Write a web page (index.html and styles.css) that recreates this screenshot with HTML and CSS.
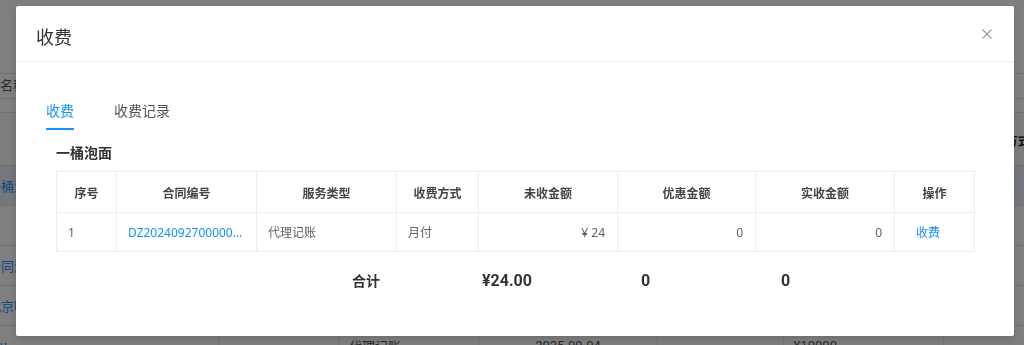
FILE: index.html
```html
<!DOCTYPE html>
<html lang="zh-CN">
<head>
  <meta charset="UTF-8" />
  <meta name="viewport" content="width=device-width, initial-scale=1.0" />
  <title>收费</title>
  <link rel="stylesheet" href="styles.css">
</head>
<body>

  <!-- page behind the dialog -->
  <div class="page">
    <div class="filter"><span class="filter-label">名称</span></div>
    <table class="list">
      <colgroup>
        <col style="width:218px"><col style="width:120px"><col style="width:140px"><col style="width:179px">
        <col style="width:125px"><col style="width:160px"><col style="width:82px">
      </colgroup>
      <tr class="list-head">
        <th></th><th></th><th></th><th></th><th></th><th></th><th class="last-head">收款方式</th>
      </tr>
      <tr class="hover"><td><span class="cut">一桶泡面</span></td><td></td><td>代理记账</td><td></td><td></td><td></td><td></td></tr>
      <tr><td></td><td></td><td></td><td></td><td></td><td></td><td></td></tr>
      <tr><td><span class="cut">合同测试</span></td><td></td><td>代理记账</td><td></td><td></td><td></td><td></td></tr>
      <tr><td><span class="cut">北京吗</span></td><td></td><td>代理记账</td><td></td><td></td><td></td><td></td></tr>
      <tr><td><span class="cut2">ч</span></td><td></td><td>代理记账</td><td class="mid">2025-09-04</td><td></td><td>¥10000</td><td></td></tr>
    </table>
  </div>

  <div class="mask"></div>

  <div class="modal-wrap">
    <div class="modal">
      <div class="modal-header">
        <span class="modal-title">收费</span>
        <span class="modal-close">
          <svg width="10" height="10" viewBox="0 0 10 10"><path d="M0.5 0.5L9.5 9.5M9.5 0.5L0.5 9.5" stroke="#9a9a9a" stroke-width="1.1" fill="none"/></svg>
        </span>
      </div>

      <div class="modal-body">
        <div class="tabs">
          <div class="tab active">收费</div>
          <div class="tab">收费记录</div>
        </div>

        <div class="customer">一桶泡面</div>

        <table class="fee">
          <colgroup>
            <col style="width:60px"><col style="width:140px"><col style="width:140px"><col style="width:82px">
            <col style="width:139px"><col style="width:138px"><col style="width:139px"><col style="width:80px">
          </colgroup>
          <thead>
            <tr>
              <th>序号</th><th>合同编号</th><th>服务类型</th><th>收费方式</th>
              <th>未收金额</th><th>优惠金额</th><th>实收金额</th><th>操作</th>
            </tr>
          </thead>
          <tbody>
            <tr>
              <td>1</td>
              <td class="link">DZ2024092700000123</td>
              <td>代理记账</td>
              <td>月付</td>
              <td class="num">¥ 24</td>
              <td class="num">0</td>
              <td class="num">0</td>
              <td class="action link">收费</td>
            </tr>
          </tbody>
        </table>

        <div class="total">
          <span class="total-label">合计</span>
          <span class="total-num">¥24.00</span>
          <span class="total-num">0</span>
          <span class="total-num">0</span>
        </div>
      </div>
    </div>
  </div>

</body>
</html>
```

FILE: styles.css
```css
* {
  box-sizing: border-box;
}
body {
  margin: 0;
  background-color: #fff;
  color: #333;
  font-family: Roboto, "Noto Sans CJK SC", sans-serif;
  overflow: hidden;
}

/* background page */
.page {
  height: 345px;
  overflow: hidden;
  padding-top: 73px;
  font-size: 13px;
}
.filter {
  height: 26px;
  border-top: 1px solid #e0e0e0;
  border-bottom: 1px solid #e0e0e0;
  line-height: 24px;
  color: #555;
}
.list {
  margin-top: 13px;
  width: 1026px;
  border-collapse: collapse;
  table-layout: fixed;
}
.list th, .list td {
  border-bottom: 1px solid #e0e0e0;
  border-right: 1px solid #e6e6e6;
  height: 40px;
  padding: 0 10px;
  white-space: nowrap;
  overflow: hidden;
  color: #555;
  text-align: left;
}
.list td:first-child {
  padding: 0;
  color: #1890ff;
}
.list-head th {
  height: 53px;
  border-top: 1px solid #e0e0e0;
  background-color: #fafafa;
}
.list .last-head {
  padding-left: 35px;
  color: #222;
}
.hover td {
  background-color: #e8f1fb;
}
.cut {
  margin-left: -12px;
}
.list .mid {
  padding-left: 56px;
}

/* dialog */
.mask {
  position: fixed;
  inset: 0;
  background-color: rgba(0, 0, 0, 0.5);
}
.modal-wrap {
  position: fixed;
  inset: 0;
  padding: 6px 0 0 16px;
}
.modal {
  width: 998px;
  background-color: #fff;
  border-radius: 2px;
  box-shadow: 0 3px 8px rgba(0, 0, 0, 0.15);
}
.modal-header {
  display: flex;
  justify-content: space-between;
  align-items: flex-start;
  padding: 20px 22px 11px 20px;
  border-bottom: 1px solid #f0f0f0;
}
.modal-title {
  font-size: 18px;
  line-height: 24px;
  color: #333;
}
.modal-close {
  display: flex;
  margin-top: 3px;
}
.modal-body {
  padding: 38px 40px 28px 40px;
}
.tabs {
  display: flex;
  gap: 40px;
  margin-left: -10px;
}
.tab {
  font-size: 14px;
  line-height: 22px;
  padding-bottom: 6px;
  border-bottom: 2px solid transparent;
  color: #555;
}
.tab.active {
  color: #1890ff;
  border-bottom-color: #1890ff;
}
.customer {
  margin-top: 12px;
  font-size: 14px;
  line-height: 22px;
  font-weight: bold;
  color: #333;
}
.fee {
  margin-top: 7px;
  width: 918px;
  border-collapse: collapse;
  table-layout: fixed;
  font-size: 12px;
}
.fee th, .fee td {
  border: 1px solid #ebeef5;
  white-space: nowrap;
  overflow: hidden;
  text-overflow: ellipsis;
}
.fee th {
  height: 41px;
  font-weight: 600;
  color: #444;
  text-align: center;
}
.fee td {
  height: 39px;
  padding: 0 11px;
  color: #606266;
  font-family: "Noto Sans", "Noto Sans CJK SC", sans-serif;
}
.fee .num {
  text-align: right;
  padding-right: 12px;
}
.fee .action {
  padding-left: 21px;
}
.fee .link {
  color: #1890ff;
}
.total {
  display: grid;
  grid-template-columns: 130px 159px 140px 1fr;
  align-items: center;
  height: 56px;
  padding-left: 296px;
  font-weight: bold;
  color: #333;
}
.total-label {
  font-size: 14px;
}
.total-num {
  font-size: 16px;
}
```
